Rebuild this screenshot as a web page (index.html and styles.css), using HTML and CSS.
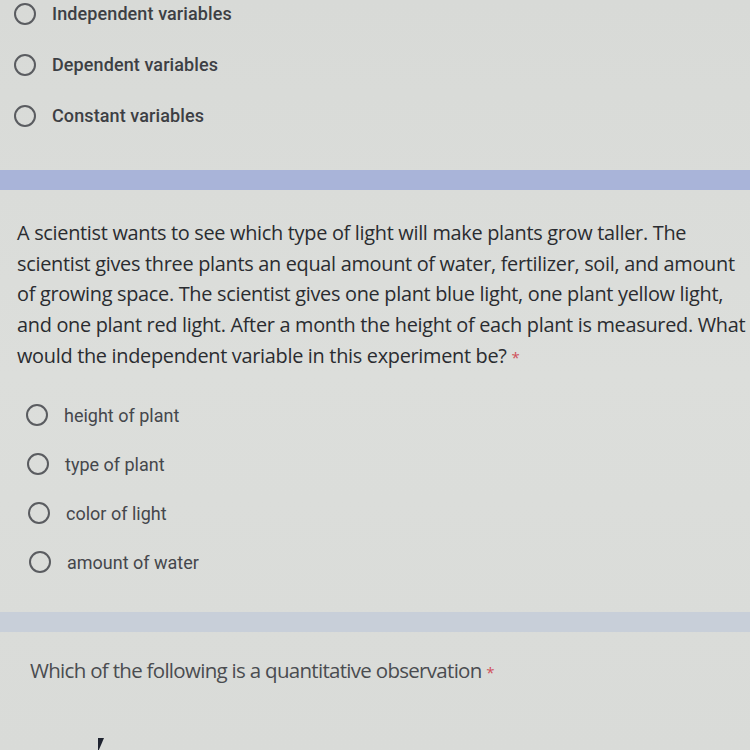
FILE: index.html
```html
<!DOCTYPE html>
<html>
<head>
<meta charset="utf-8">
<link rel="stylesheet" href="styles.css">
</head>
<body>
<div class="page">
  <div class="options top-options">
    <div class="opt"><span class="radio"></span><span class="label">Independent variables</span></div>
    <div class="opt"><span class="radio"></span><span class="label">Dependent variables</span></div>
    <div class="opt"><span class="radio"></span><span class="label">Constant variables</span></div>
  </div>
  <div class="band band-blue"></div>
  <div class="question">
    <p class="qtext">A scientist wants to see which type of light will make plants grow taller. The<br>scientist gives three plants an equal amount of water, fertilizer, soil, and amount<br>of growing space. The scientist gives one plant blue light, one plant yellow light,<br>and one plant red light. After a month the height of each plant is measured. What<br>would the independent variable in this experiment be? <span class="req">*</span></p>
    <div class="options q-options">
      <div class="opt"><span class="radio"></span><span class="label">height of plant</span></div>
      <div class="opt"><span class="radio"></span><span class="label">type of plant</span></div>
      <div class="opt"><span class="radio"></span><span class="label">color of light</span></div>
      <div class="opt"><span class="radio"></span><span class="label">amount of water</span></div>
    </div>
  </div>
  <div class="band band-pale"></div>
  <div class="question2">
    <p class="qtext2">Which of the following is a quantitative observation <span class="req">*</span></p>
  </div>
  <div class="cursor"></div>
</div>
</body>
</html>
```
FILE: styles.css
```css
html, body {
  margin: 0;
  padding: 0;
  background: #d9dbd8;
  overflow: hidden;
}
.page {
  position: relative;
  width: 750px;
  height: 750px;
  overflow: hidden;
  background: linear-gradient(180deg, #d8dad7 0%, #dcdedb 50%, #d9dbd8 100%);
}
.options {
  display: flex;
  flex-direction: column;
}
.opt {
  display: flex;
  align-items: center;
}
.radio {
  box-sizing: border-box;
  width: 22px;
  height: 22px;
  border: 2.5px solid #5a5c60;
  border-radius: 50%;
  flex: none;
}
.label {
  font-family: Roboto, "Noto Sans", sans-serif;
  color: #3d3f44;
}
.top-options {
  margin-top: -12px;
  padding-left: 14px;
}
.top-options .opt {
  height: 51px;
  gap: 16px;
}
.top-options .label {
  font-size: 18px;
  font-weight: 500;
  letter-spacing: 0.1px;
}
.band {
  width: 100%;
}
.band-blue {
  margin-top: 29px;
  height: 20px;
  background: #a9b4d9;
}
.question {
  padding: 28px 0 0 17px;
}
.qtext {
  margin: 0;
  font-family: "Open Sans", sans-serif;
  font-size: 19.9px;
  line-height: 30.7px;
  color: #2a2c30;
  letter-spacing: -0.3px;
  white-space: nowrap;
}
.req {
  color: #d0505a;
  font-size: 15px;
}
.q-options {
  margin-top: 18px;
  padding-left: 9px;
}
.q-options .opt {
  height: 49px;
  gap: 16px;
}
.q-options .opt:nth-child(2) { padding-left: 1px; }
.q-options .opt:nth-child(3) { padding-left: 2px; }
.q-options .opt:nth-child(4) { padding-left: 3px; }
.q-options .label {
  font-size: 18px;
  color: #45474c;
}
.band-pale {
  margin-top: 25px;
  height: 20px;
  background: #c8cfd9;
}
.question2 {
  padding: 24px 0 0 30px;
}
.qtext2 {
  margin: 0;
  font-family: "Open Sans", sans-serif;
  font-size: 20.5px;
  letter-spacing: -0.7px;
  color: #4a4c50;
}
.cursor {
  position: absolute;
  left: 98px;
  top: 738px;
  width: 0;
  height: 0;
  border-left: 6px solid #1f2430;
  border-right: 6px solid transparent;
  border-bottom: 14px solid transparent;
}
```
